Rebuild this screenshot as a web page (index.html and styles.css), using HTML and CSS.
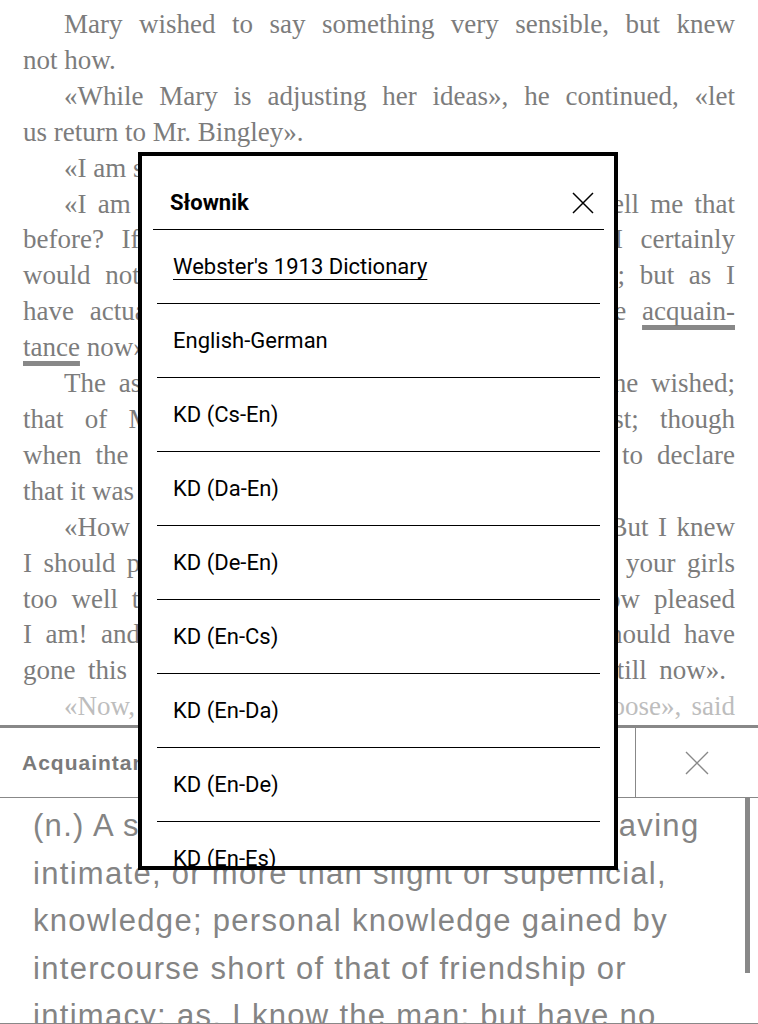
FILE: index.html
```html
<!DOCTYPE html>
<html>
<head>
<meta charset="utf-8">
<link rel="stylesheet" href="styles.css">
</head>
<body>
<div class="screen">
  <div class="book">
    <span class="ln ind">Mary wished to say something very sensible, but knew</span>
    <span class="ln end">not how.</span>
    <span class="ln ind">«While Mary is adjusting her ideas», he continued, «let</span>
    <span class="ln end">us return to Mr. Bingley».</span>
    <span class="ln ind end">«I am sick of Mr. Bingley», cried his wife.</span>
    <span class="ln ind">«I am sorry to hear that; but why did not you tell me that</span>
    <span class="ln">before? If I had known as much this morning I certainly</span>
    <span class="ln">would not have called on him. It is very unlucky; but as I</span>
    <span class="ln">have actually paid the visit, we cannot escape the <span class="sel">acquain-</span></span>
    <span class="ln end"><span class="sel">tance</span> now».</span>
    <span class="ln ind">The astonishment of the ladies was just what she wished;</span>
    <span class="ln">that of Mrs. Bennet perhaps surpassing the rest; though</span>
    <span class="ln">when the first tumult of joy was over, she began to declare</span>
    <span class="ln end">that it was what she had expected all the while.</span>
    <span class="ln ind">«How good it was in you, my dear Mr. Bennet! But I knew</span>
    <span class="ln">I should persuade you at last. I was sure you loved your girls</span>
    <span class="ln">too well to neglect such an acquaintance. Well, how pleased</span>
    <span class="ln">I am! and it is such a good joke, too, that you should have</span>
    <span class="ln near">gone this morning and never said a word about it till now».</span>
    <span class="ln ind fade">«Now, Kitty, you may cough as much as you choose», said</span>
  </div>

  <div class="panel">
    <div class="panel-head">
      <div class="panel-title">Acquaintance</div>
      <div class="panel-close">
        <svg width="24" height="24" viewBox="0 0 24 24"><path d="M1 1L23 23M23 1L1 23" stroke="#888" stroke-width="1.4" fill="none"/></svg>
      </div>
    </div>
    <div class="panel-body">
      <div class="def">(n.) A state of being acquainted, or of having intimate, or more than slight or superficial, knowledge; personal knowledge gained by intercourse short of that of friendship or intimacy; as, I know the man; but have no acquaintance with him.</div>
      <div class="scrollbar"></div>
    </div>
  </div>

  <div class="dialog">
    <div class="dlg-head">
      <div class="dlg-title">Słownik</div>
      <svg class="dlg-x" width="22" height="22" viewBox="0 0 22 22"><path d="M1 1L21 21M21 1L1 21" stroke="#000" stroke-width="1.5" fill="none"/></svg>
    </div>
    <div class="dlg-list">
      <div class="item"><span class="cur">Webster's 1913 Dictionary</span></div>
      <div class="item">English-German</div>
      <div class="item">KD (Cs-En)</div>
      <div class="item">KD (Da-En)</div>
      <div class="item">KD (De-En)</div>
      <div class="item">KD (En-Cs)</div>
      <div class="item">KD (En-Da)</div>
      <div class="item">KD (En-De)</div>
      <div class="item">KD (En-Es)</div>
    </div>
  </div>
</div>
</body>
</html>
```

FILE: styles.css
```css
html, body {
  margin: 0;
  padding: 0;
  background: #fff;
}
.screen {
  position: relative;
  width: 758px;
  height: 1024px;
  overflow: hidden;
  display: flex;
  flex-direction: column;
}
.book {
  height: 725px;
  flex-shrink: 0;
  overflow: hidden;
  padding: 7px 23px 0 23px;
  box-sizing: border-box;
  font-family: "Liberation Serif", serif;
  font-size: 27px;
  line-height: 35.9px;
  color: #7c7c7c;
}
.ln {
  display: block;
  white-space: nowrap;
  text-align: justify;
  text-align-last: justify;
}
.ln.ind { padding-left: 41px; }
.ln.end { text-align-last: left; }
.ln.near { padding-right: 9px; }
.ln.fade { color: #bdbdbd; }
.sel {
  text-decoration: underline;
  text-decoration-color: #888;
  text-decoration-thickness: 5px;
  text-underline-offset: 5px;
}

.panel {
  flex: 1;
  min-height: 0;
  border-top: 3px solid #888;
  display: flex;
  flex-direction: column;
  font-family: "Liberation Sans", Arial, sans-serif;
}
.panel-head {
  height: 69px;
  border-bottom: 1px solid #888;
  display: flex;
  align-items: center;
  flex-shrink: 0;
}
.panel-title {
  flex: 1;
  padding-left: 22px;
  font-weight: bold;
  font-size: 21px;
  letter-spacing: 1px;
  color: #7a7a7a;
}
.panel-close {
  width: 122px;
  height: 100%;
  border-left: 1px solid #888;
  display: flex;
  align-items: center;
  justify-content: center;
}
.panel-body {
  flex: 1;
  min-height: 0;
  position: relative;
  border-bottom: 1px solid #888;
  overflow: hidden;
  padding: 4px 50px 0 33px;
}
.def {
  font-size: 31px;
  line-height: 47.5px;
  letter-spacing: 1.3px;
  color: #848484;
}
.scrollbar {
  position: absolute;
  left: 745px;
  top: 0;
  width: 5px;
  height: 175px;
  background: #888;
}

.dialog {
  position: absolute;
  left: 138px;
  top: 152px;
  width: 480px;
  height: 718px;
  box-sizing: border-box;
  border: 4px solid #000;
  background: #fff;
  overflow: hidden;
  font-family: Roboto, "Liberation Sans", sans-serif;
  color: #000;
}
.dlg-head {
  height: 73px;
  margin: 0 10px 0 11px;
  border-bottom: 1px solid #000;
  display: flex;
  align-items: center;
  padding: 0 0 0 17px;
}
.dlg-title {
  flex: 1;
  font-weight: bold;
  font-size: 22px;
  padding-top: 20px;
}
.dlg-x {
  margin-right: 10px;
  margin-top: 20px;
}
.dlg-list {
  margin: 0 14px 0 15px;
}
.item {
  height: 73px;
  border-bottom: 1px solid #000;
  display: flex;
  align-items: center;
  padding-left: 16px;
  font-size: 22px;
}
.cur {
  text-decoration: underline;
  text-decoration-thickness: 1px;
  text-underline-offset: 5px;
}
```
